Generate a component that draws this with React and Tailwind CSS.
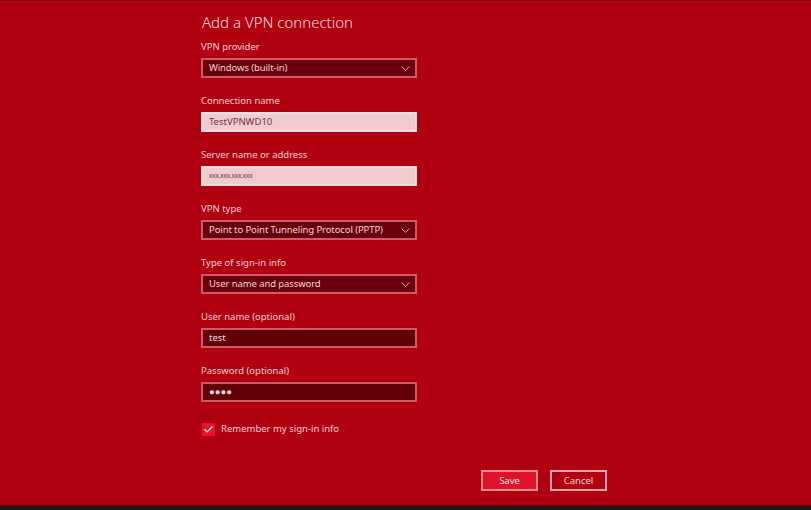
import { Check } from 'lucide-react';

const font = { fontFamily: '"Noto Sans", "Open Sans", "Liberation Sans", sans-serif' };

function Chevron() {
  return (
    <svg width="9" height="5" viewBox="0 0 9 5" className="shrink-0">
      <path d="M0.5 0.5 L4.5 4.3 L8.5 0.5" fill="none" stroke="#e8a4ac" strokeWidth="1" />
    </svg>
  );
}

function Select({ label, value }) {
  return (
    <div className="flex flex-col">
      <div className="h-[12px] leading-[12px] text-[9.5px] text-[#f3cfd3]">{label}</div>
      <div className="mt-[5px] w-[216px] h-[20px] bg-[#6a000c] border-2 border-[#cf5a68] flex items-center justify-between pl-[6px] pr-[5px]">
        <span className="text-[9.5px] text-[#f3d4d8] leading-none tracking-[-0.1px]">{value}</span>
        <Chevron />
      </div>
    </div>
  );
}

function Field({ label, value, light, small }) {
  return (
    <div className="flex flex-col">
      <div className="h-[12px] leading-[12px] text-[9.5px] text-[#f3cfd3]">{label}</div>
      <div
        className={
          light
            ? 'mt-[5px] w-[216px] h-[20px] bg-[#f1cbcf] border-2 border-[#f6dde0] flex items-center pl-[6px]'
            : 'mt-[5px] w-[216px] h-[20px] bg-[#62000a] border-2 border-[#cf5a68] flex items-center pl-[6px]'
        }
      >
        <span
          className={
            (light ? 'text-[#6a3a40] ' : 'text-[#f6dcdf] ') +
            (small ? 'text-[6.5px] tracking-[-0.2px]' : 'text-[9.5px]') +
            ' leading-none'
          }
        >
          {value}
        </span>
      </div>
    </div>
  );
}

export default function App() {
  return (
    <div className="w-[811px] h-[510px] bg-[#b10010] flex flex-col overflow-hidden" style={font}>
      <div className="h-[1px] bg-[#74000c]" />
      <div className="flex-1 flex flex-col pl-[201px] pt-[11px]">
        <h1 className="h-[20px] leading-[20px] text-[15px] font-light text-[#f5dade] pl-[1px]">Add a VPN connection</h1>
        <div className="mt-[9px] flex flex-col gap-[17px]">
          <Select label="VPN provider" value="Windows (built-in)" />
          <Field label="Connection name" value="TestVPNWD10" light />
          <Field label="Server name or address" value="xxx.xxx.xxx.xxx" light small />
          <Select label="VPN type" value="Point to Point Tunneling Protocol (PPTP)" />
          <Select label="Type of sign-in info" value="User name and password" />
          <Field label="User name (optional)" value="test" />
          <Field label="Password (optional)" value="●●●●" />
        </div>
        <div className="mt-[20px] flex items-center gap-[6px] pl-[1px]">
          <div className="w-[13px] h-[13px] bg-[#e3142c] flex items-center justify-center">
            <Check size={11} strokeWidth={2.5} color="#ffffff" />
          </div>
          <span className="text-[9.5px] text-[#f3cfd3]">Remember my sign-in info</span>
        </div>
        <div className="mt-[34px] flex gap-[12px] pl-[280px]">
          <button className="w-[57px] h-[21px] bg-[#e0122a] border-2 border-[#f08a96] text-[9.5px] text-[#fbe2e5] leading-none">
            Save
          </button>
          <button className="w-[57px] h-[21px] bg-transparent border-2 border-[#e7a3ab] text-[9.5px] text-[#f6d6da] leading-none">
            Cancel
          </button>
        </div>
      </div>
      <div className="h-[1px] bg-[#6a000a]" />
      <div className="h-[4px] bg-[#1c1416]" />
    </div>
  );
}
